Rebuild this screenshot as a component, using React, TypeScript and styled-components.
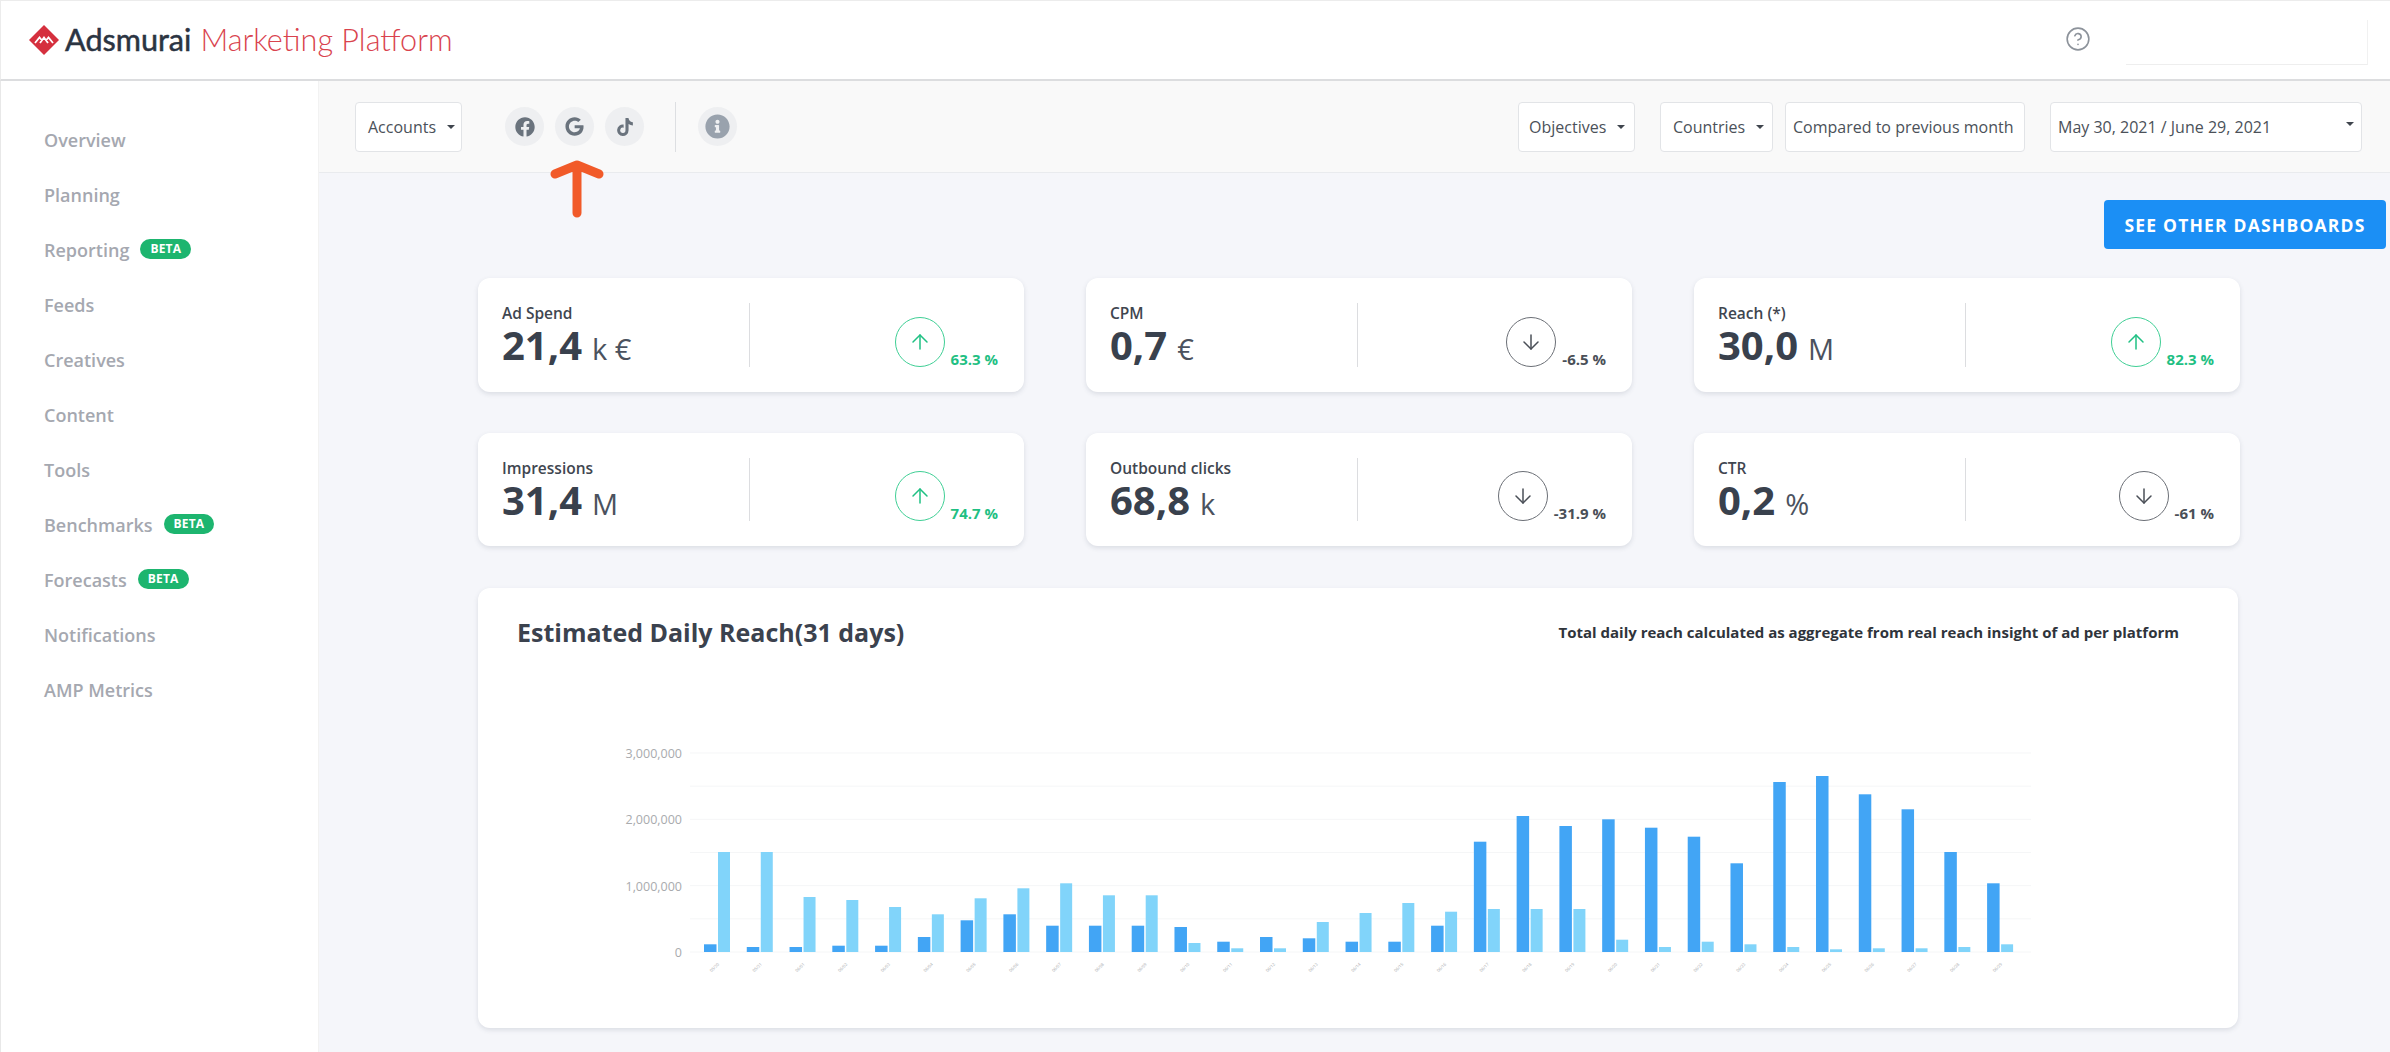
import React from "react";
import styled, { createGlobalStyle } from "styled-components";
import { FaFacebook, FaGoogle, FaTiktok, FaInfoCircle } from "react-icons/fa";
import { ArrowUp, ArrowDown, CircleHelp } from "lucide-react";

const Global = createGlobalStyle`
  html, body { margin: 0; padding: 0; height: 1052px; overflow: hidden; background: #fff; }
  #root { height: 1052px; }
  * { box-sizing: border-box; }
`;

const Page = styled.div`
  width: 2390px;
  height: 1052px;
  display: flex;
  flex-direction: column;
  font-family: "Open Sans", "Liberation Sans", sans-serif;
  color: #3b424e;
  overflow: hidden;
`;

const Header = styled.header`
  height: 81px;
  flex: none;
  display: flex;
  align-items: center;
  padding: 0 22px 0 28px;
  background: #fff;
  border-top: 1px solid #ececec;
  border-left: 1px solid #ececec;
  border-bottom: 2px solid #dcdddf;
`;

const Brand = styled.div`
  display: flex;
  align-items: center;
  gap: 6px;
  font-family: Lato, "Liberation Sans", sans-serif;
  font-size: 30.6px;
  line-height: 36px;
`;

const BrandName = styled.span`
  color: #2b3442;
  font-weight: 400;
  -webkit-text-stroke: 0.5px #2b3442;
`;

const BrandProduct = styled.span`
  color: #d9434e;
  font-weight: 300;
  margin-left: 3px;
`;

const HeaderRight = styled.div`
  margin-left: auto;
  display: flex;
  align-items: center;
  gap: 35px;
  color: #8d939b;
`;

const HelpIcon = styled(CircleHelp)`
  margin-top: -2px;
`;

const GhostInput = styled.div`
  width: 242px;
  height: 45px;
  margin-top: 4px;
  border-right: 1px solid #f1f1f1;
  border-bottom: 1px solid #eeeeee;
`;

const Body = styled.div`
  flex: 1;
  display: flex;
  min-height: 0;
`;

const Sidebar = styled.nav`
  width: 319px;
  flex: none;
  padding: 31px 0 0 43px;
  background: #fff;
  border-left: 1px solid #e8e8e8;
  border-right: 1px solid #f2f2f2;
`;

const NavItem = styled.div`
  height: 55px;
  display: flex;
  align-items: center;
  gap: 11px;
  font-size: 18px;
  font-weight: 600;
  color: #a5a8b0;
`;

const Beta = styled.span`
  height: 20px;
  padding: 0 10px;
  display: inline-flex;
  align-items: center;
  border-radius: 10px;
  background: #1db56f;
  color: #fff;
  font-size: 12px;
  font-weight: 700;
  letter-spacing: 0.2px;
  margin-top: -2px;
`;

const Main = styled.main`
  flex: 1;
  min-width: 0;
  background: #f5f6fa;
  display: flex;
  flex-direction: column;
`;

const Toolbar = styled.div`
  position: relative;
  height: 92px;
  flex: none;
  display: flex;
  align-items: center;
  padding: 0 28px 0 36px;
  background: #f9f9f9;
  border-bottom: 1px solid #e9ebee;
`;

const FilterButton = styled.div<{ $w: number; $ml?: number; $pad: number; $spread?: boolean }>`
  width: ${(p) => p.$w}px;
  margin-left: ${(p) => p.$ml ?? 0}px;
  height: 50px;
  flex: none;
  display: flex;
  align-items: center;
  justify-content: ${(p) => (p.$spread ? "space-between" : "flex-start")};
  gap: 11px;
  padding: 0 ${(p) => p.$pad}px;
  background: #fff;
  border: 1px solid #e2e4e7;
  border-radius: 4px;
  font-size: 16px;
  color: #4b5159;
  white-space: nowrap;
`;

const Caret = styled.i<{ $up?: number }>`
  width: 0;
  height: 0;
  flex: none;
  border-left: 4px solid transparent;
  border-right: 4px solid transparent;
  border-top: 4.5px solid #3f454d;
  margin-top: ${(p) => p.$up ?? 0}px;
`;

const Socials = styled.div`
  display: flex;
  gap: 11px;
  margin-left: 43px;
`;

const SocialIcon = styled.div`
  width: 39px;
  height: 39px;
  border-radius: 50%;
  background: #eeeff1;
  color: #6a737d;
  display: flex;
  align-items: center;
  justify-content: center;
`;

const VRule = styled.div`
  width: 1px;
  height: 50px;
  background: #dddfe2;
  margin: 0 22px 0 31px;
`;

const InfoIcon = styled(SocialIcon)`
  color: #99a2ad;
`;

const FilterGroup = styled.div`
  margin-left: auto;
  display: flex;
  align-items: center;
`;

const Pointer = styled.svg`
  position: absolute;
  left: 228px;
  top: 78px;
  width: 60px;
  height: 62px;
`;

const Content = styled.div`
  flex: 1;
  min-height: 0;
  padding: 27px 4px 0 159px;
  display: flex;
  flex-direction: column;
`;

const DashButton = styled.div`
  align-self: flex-end;
  width: 282px;
  height: 49px;
  display: flex;
  align-items: center;
  justify-content: center;
  background: #1b8ff5;
  border-radius: 4px;
  color: #fff;
  font-size: 17.5px;
  font-weight: 700;
  letter-spacing: 1.2px;
  white-space: nowrap;
`;

const CardGrid = styled.div`
  margin-top: 29px;
  width: 1762px;
  display: grid;
  grid-template-columns: repeat(3, 546px);
  grid-auto-rows: 113.5px;
  column-gap: 62px;
  row-gap: 41px;
`;

const Card = styled.div`
  display: flex;
  align-items: stretch;
  padding: 25px 26px 25px 24px;
  background: #fff;
  border-radius: 12px;
  box-shadow: 0 2px 5px rgba(60, 70, 90, 0.14);
`;

const CardLeft = styled.div`
  width: 247px;
  flex: none;
`;

const CardLabel = styled.div`
  height: 20px;
  line-height: 20px;
  font-size: 15.5px;
  font-weight: 600;
  color: #3f4650;
  white-space: nowrap;
`;

const CardValue = styled.div`
  line-height: 43px;
  font-size: 40px;
  font-weight: 700;
  color: #39414d;
  white-space: nowrap;
`;

const CardUnit = styled.span`
  margin-left: 10px;
  font-size: 29px;
  font-weight: 400;
  color: #4b525e;
`;

const CardDivider = styled.div`
  width: 1px;
  flex: none;
  background: #dcdde0;
`;

const CardRight = styled.div`
  flex: 1;
  display: flex;
  justify-content: flex-end;
  align-items: flex-end;
  gap: 6px;
`;

const Trend = styled.div<{ $up: boolean }>`
  width: 50px;
  height: 50px;
  display: flex;
  align-items: center;
  justify-content: center;
  border-radius: 50%;
  border: 1.4px solid ${(p) => (p.$up ? "#3fcf95" : "#6b6f76")};
  color: ${(p) => (p.$up ? "#1fc083" : "#4a4f57")};
`;

const Percent = styled.div<{ $up: boolean }>`
  font-size: 15px;
  line-height: 16px;
  font-weight: 700;
  color: ${(p) => (p.$up ? "#1fc083" : "#4a4f57")};
  white-space: nowrap;
`;

const ChartCard = styled.section`
  margin-top: 42px;
  width: 1760px;
  height: 440px;
  background: #fff;
  border-radius: 12px;
  box-shadow: 0 2px 5px rgba(60, 70, 90, 0.14);
  padding-top: 28px;
`;

const ChartHead = styled.div`
  display: flex;
  justify-content: space-between;
  align-items: center;
  height: 32px;
  padding: 0 59px 0 39px;
`;

const ChartTitle = styled.h2`
  margin: 0;
  font-size: 25px;
  font-weight: 700;
  color: #3b424e;
  white-space: nowrap;
`;

const ChartNote = styled.div`
  font-size: 15px;
  font-weight: 700;
  color: #2f343b;
  white-space: nowrap;
`;

const ChartSvg = styled.svg`
  display: block;
  margin-top: 32px;
  width: 1760px;
  height: 340px;
  font-family: "Open Sans", "Liberation Sans", sans-serif;
`;

const LogoMark = () => (
  <svg width="30" height="30" viewBox="0 0 30 30">
    <path d="M15 0 L30 15 L15 30 L0 15 Z" fill="#d5303e" />
    <path
      d="M6 18 L10.5 12.5 L13 15.5 M11 18 L15 12.5 L19 18 M17 15.5 L19.5 12.5 L24 18"
      fill="none"
      stroke="#fff"
      strokeWidth="1.8"
    />
  </svg>
);

const navItems: { label: string; beta?: boolean }[] = [
  { label: "Overview" },
  { label: "Planning" },
  { label: "Reporting", beta: true },
  { label: "Feeds" },
  { label: "Creatives" },
  { label: "Content" },
  { label: "Tools" },
  { label: "Benchmarks", beta: true },
  { label: "Forecasts", beta: true },
  { label: "Notifications" },
  { label: "AMP Metrics" },
];

const cards = [
  { label: "Ad Spend", value: "21,4", unit: "k €", pct: "63.3 %", up: true },
  { label: "CPM", value: "0,7", unit: "€", pct: "-6.5 %", up: false },
  { label: "Reach (*)", value: "30,0", unit: "M", pct: "82.3 %", up: true },
  { label: "Impressions", value: "31,4", unit: "M", pct: "74.7 %", up: true },
  { label: "Outbound clicks", value: "68,8", unit: "k", pct: "-31.9 %", up: false },
  { label: "CTR", value: "0,2", unit: "%", pct: "-61 %", up: false },
];

const bars: [number, number][] = [
  [7.7, 100], [5, 100], [5, 55], [6.3, 52], [6.3, 45], [15, 37.7], [31.7, 53.7], [37.7, 63.7],
  [26.3, 68.7], [26.3, 56.7], [26.3, 56.7], [25, 9], [10.3, 3.7], [15, 3.7], [13.7, 30], [10.3, 39],
  [10.3, 49], [26.3, 40.3], [110.3, 43], [136, 43], [126, 43], [132.7, 12.3], [124.3, 5], [115.3, 10.3],
  [88.7, 7.7], [170, 5], [176, 2.7], [157.7, 3.7], [142.7, 3.7], [100, 5], [68.7, 7.7],
];

const BASE = 272;
const STEP = 42.77;

const dateLabel = (i: number) => {
  const d = new Date(Date.UTC(2021, 4, 30 + i));
  return `${String(d.getUTCMonth() + 1).padStart(2, "0")}/${String(d.getUTCDate()).padStart(2, "0")}`;
};

const Chart = () => (
  <ChartSvg viewBox="0 0 1760 340">
    {[0, 1, 2, 3, 4, 5, 6].map((n) => (
      <line key={n} x1="212" x2="1553" y1={BASE - n * 33.17} y2={BASE - n * 33.17} stroke="#f5f6f7" strokeWidth="1" />
    ))}
    {["0", "1,000,000", "2,000,000", "3,000,000"].map((t, n) => (
      <text key={t} x="204" y={BASE + 5 - n * 66.3} textAnchor="end" fontSize="12.5" fill="#a9abae">
        {t}
      </text>
    ))}
    {bars.map(([dark, light], i) => {
      const x = 226 + i * STEP;
      return (
        <g key={i}>
          <rect x={x} y={BASE - dark} width="12.5" height={dark} fill="#42a5f5" />
          <rect x={x + 14} y={BASE - light} width="12" height={light} fill="#81d4fa" />
          <text
            x={x + 10}
            y={BASE + 17}
            fontSize="4.2"
            fill="#a9abae"
            textAnchor="middle"
            transform={`rotate(-45 ${x + 10} ${BASE + 15})`}
          >
            {dateLabel(i)}
          </text>
        </g>
      );
    })}
  </ChartSvg>
);

export default function App() {
  return (
    <Page>
      <Global />
      <Header>
        <Brand>
          <LogoMark />
          <BrandName>Adsmurai</BrandName>
          <BrandProduct>Marketing Platform</BrandProduct>
        </Brand>
        <HeaderRight>
          <HelpIcon size={26} strokeWidth={1.5} />
          <GhostInput />
        </HeaderRight>
      </Header>
      <Body>
        <Sidebar>
          {navItems.map((n) => (
            <NavItem key={n.label}>
              {n.label}
              {n.beta && <Beta>BETA</Beta>}
            </NavItem>
          ))}
        </Sidebar>
        <Main>
          <Toolbar>
            <FilterButton $w={107} $pad={12}>
              Accounts
              <Caret />
            </FilterButton>
            <Socials>
              <SocialIcon>
                <FaFacebook size={20} />
              </SocialIcon>
              <SocialIcon>
                <FaGoogle size={19} />
              </SocialIcon>
              <SocialIcon>
                <FaTiktok size={18} />
              </SocialIcon>
            </Socials>
            <VRule />
            <InfoIcon>
              <FaInfoCircle size={25} />
            </InfoIcon>
            <FilterGroup>
              <FilterButton $w={117} $pad={10}>
                Objectives
                <Caret />
              </FilterButton>
              <FilterButton $w={113} $ml={25} $pad={12}>
                Countries
                <Caret />
              </FilterButton>
              <FilterButton $w={240} $ml={12} $pad={7}>
                Compared to previous month
              </FilterButton>
              <FilterButton $w={312} $ml={25} $pad={7} $spread>
                May 30, 2021 / June 29, 2021
                <Caret $up={-6} />
              </FilterButton>
            </FilterGroup>
            <Pointer viewBox="0 0 60 62">
              <path
                d="M30 54 V6 M8 15 L30 6 L52 15"
                fill="none"
                stroke="#f15a29"
                strokeWidth="9"
                strokeLinecap="round"
                strokeLinejoin="round"
              />
            </Pointer>
          </Toolbar>
          <Content>
            <DashButton>SEE OTHER DASHBOARDS</DashButton>
            <CardGrid>
              {cards.map((c) => (
                <Card key={c.label}>
                  <CardLeft>
                    <CardLabel>{c.label}</CardLabel>
                    <CardValue>
                      {c.value}
                      <CardUnit>{c.unit}</CardUnit>
                    </CardValue>
                  </CardLeft>
                  <CardDivider />
                  <CardRight>
                    <Trend $up={c.up}>
                      {c.up ? <ArrowUp size={24} strokeWidth={1.5} /> : <ArrowDown size={24} strokeWidth={1.5} />}
                    </Trend>
                    <Percent $up={c.up}>{c.pct}</Percent>
                  </CardRight>
                </Card>
              ))}
            </CardGrid>
            <ChartCard>
              <ChartHead>
                <ChartTitle>Estimated Daily Reach(31 days)</ChartTitle>
                <ChartNote>Total daily reach calculated as aggregate from real reach insight of ad per platform</ChartNote>
              </ChartHead>
              <Chart />
            </ChartCard>
          </Content>
        </Main>
      </Body>
    </Page>
  );
}
